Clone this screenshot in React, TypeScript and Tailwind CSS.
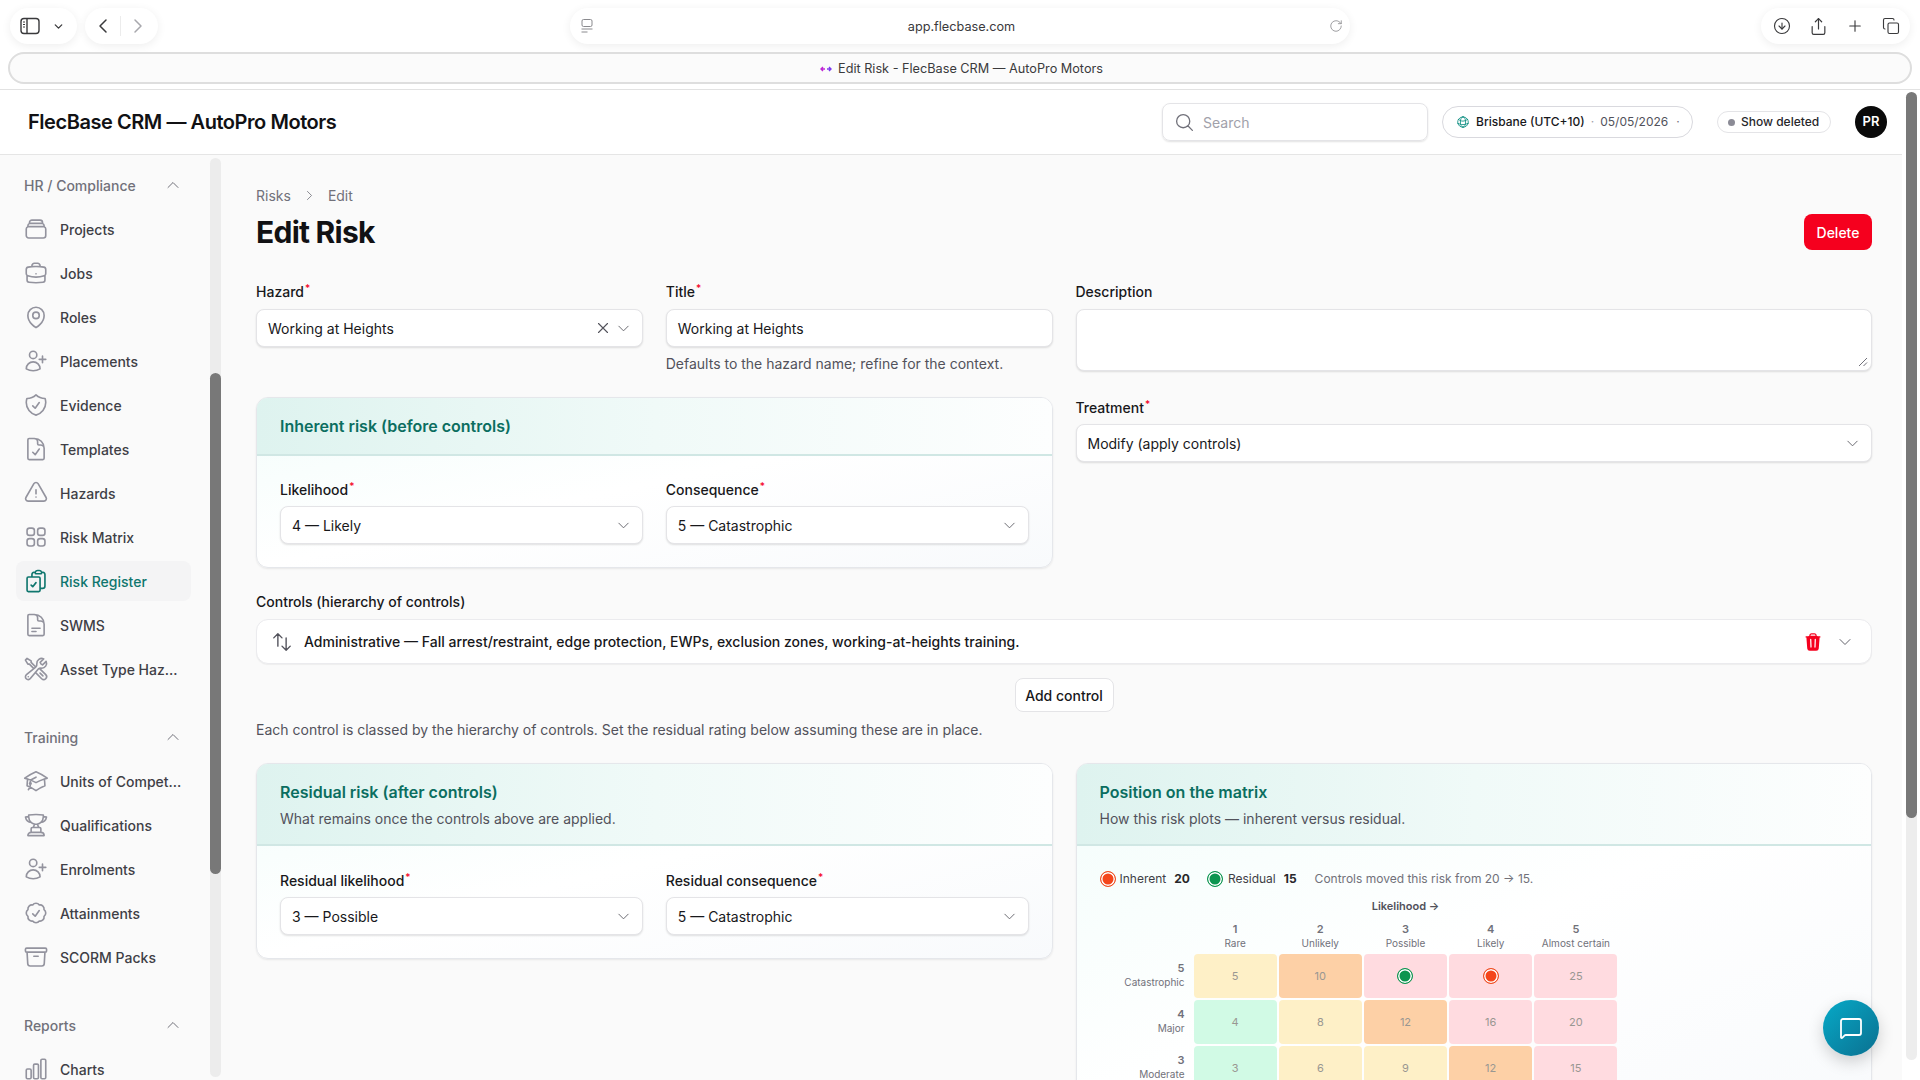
import React from "react";
import {
  HiOutlineRectangleStack, HiOutlineBriefcase, HiOutlineMapPin, HiOutlineUserPlus, HiOutlineShieldCheck,
  HiOutlineDocumentCheck, HiOutlineExclamationTriangle, HiOutlineSquares2X2, HiOutlineClipboardDocumentCheck,
  HiOutlineDocumentText, HiOutlineWrenchScrewdriver, HiOutlineAcademicCap, HiOutlineTrophy, HiOutlineCheckBadge,
  HiOutlineArchiveBox, HiOutlineChartBar, HiOutlineChevronUp, HiOutlineChevronDown, HiOutlineChevronRight,
  HiOutlineMagnifyingGlass, HiOutlineGlobeAlt, HiOutlineArrowsUpDown, HiOutlineXMark, HiTrash,
} from "react-icons/hi2";
import { ChevronLeft, ChevronRight, ChevronDown, Plus, Copy, Share, RotateCw, MessageSquare, ArrowDownCircle } from "lucide-react";

type NavItem = { label: string; Icon: React.ComponentType<{ className?: string }>; active?: boolean };

const sections: { title: string; items: NavItem[] }[] = [
  {
    title: "HR / Compliance",
    items: [
      { label: "Projects", Icon: HiOutlineRectangleStack },
      { label: "Jobs", Icon: HiOutlineBriefcase },
      { label: "Roles", Icon: HiOutlineMapPin },
      { label: "Placements", Icon: HiOutlineUserPlus },
      { label: "Evidence", Icon: HiOutlineShieldCheck },
      { label: "Templates", Icon: HiOutlineDocumentCheck },
      { label: "Hazards", Icon: HiOutlineExclamationTriangle },
      { label: "Risk Matrix", Icon: HiOutlineSquares2X2 },
      { label: "Risk Register", Icon: HiOutlineClipboardDocumentCheck, active: true },
      { label: "SWMS", Icon: HiOutlineDocumentText },
      { label: "Asset Type Haz...", Icon: HiOutlineWrenchScrewdriver },
    ],
  },
  {
    title: "Training",
    items: [
      { label: "Units of Compet...", Icon: HiOutlineAcademicCap },
      { label: "Qualifications", Icon: HiOutlineTrophy },
      { label: "Enrolments", Icon: HiOutlineUserPlus },
      { label: "Attainments", Icon: HiOutlineCheckBadge },
      { label: "SCORM Packs", Icon: HiOutlineArchiveBox },
    ],
  },
  { title: "Reports", items: [{ label: "Charts", Icon: HiOutlineChartBar }] },
];

function Label({ text, required }: { text: string; required?: boolean }) {
  return (
    <div className="h-5 text-[14px] leading-5 font-medium text-[#18181b] whitespace-nowrap">
      {text}
      {required && <sup className="text-[#f5001e] text-[10px] ml-[1px]">*</sup>}
    </div>
  );
}

function Select({ value, clear, tight }: { value: string; clear?: boolean; tight?: boolean }) {
  return (
    <div className={`${tight ? "mt-[6px]" : "mt-[7px]"} h-[38px] bg-white rounded-lg border border-[#e4e4e7] shadow-[0_1px_2px_rgba(0,0,0,0.12)] flex items-center pl-[11px] pr-[11px] text-[14px] text-[#18181b]`}>
      <span className="flex-1 whitespace-nowrap">{value}</span>
      {clear && <HiOutlineXMark className="w-[18px] h-[18px] text-[#52525b] mr-[4px]" />}
      <HiOutlineChevronDown className="w-[15px] h-[15px] text-[#63636b]" />
    </div>
  );
}

function Card({ title, sub, children }: { title: string; sub?: string; children: React.ReactNode }) {
  return (
    <div className="rounded-xl border border-[#e5e7eb] bg-gradient-to-br from-[#f3fdfb] via-white to-[#f8fafc] shadow-[0_1px_2px_rgba(0,0,0,0.08)] overflow-hidden">
      <div className={`bg-gradient-to-r from-[#def3ef] via-[#f0faf8] to-[#fdfefe] border-b-2 border-[#d0e7e4] px-[23px] ${sub ? "pt-[16px] pb-[15px]" : "py-4"}`}>
        <div className="text-[16px] leading-6 font-semibold text-[#0b6e60]">{title}</div>
        {sub && <div className="mt-[5px] text-[14px] leading-5 text-[#52525b]">{sub}</div>}
      </div>
      {children}
    </div>
  );
}

function Marker({ kind }: { kind: "red" | "green" }) {
  const cls = kind === "red"
    ? "border-[#f04e23] bg-[#f4461c]"
    : "border-[#0d9550] bg-[#0d9550]";
  return <span className={`block w-4 h-4 rounded-full border-[1.5px] ${cls} shadow-[inset_0_0_0_1.5px_#fff] shrink-0`} />;
}

const matrix: { n: number; name: string; cells: [string, string | "red" | "green"][] }[] = [
  { n: 5, name: "Catastrophic", cells: [["y", "5"], ["o", "10"], ["p", "green"], ["p", "red"], ["p", "25"]] },
  { n: 4, name: "Major", cells: [["g", "4"], ["y", "8"], ["o", "12"], ["p", "16"], ["p", "20"]] },
  { n: 3, name: "Moderate", cells: [["g", "3"], ["y", "6"], ["y", "9"], ["o", "12"], ["p", "15"]] },
];
const cellBg: Record<string, string> = {
  y: "bg-[#fef0c7]",
  o: "bg-[#fdd0a6]",
  p: "bg-[#ffdbe0]",
  g: "bg-[#d1fae5]",
};
const cols = [["1", "Rare"], ["2", "Unlikely"], ["3", "Possible"], ["4", "Likely"], ["5", "Almost certain"]];

function Sidebar() {
  return (
    <aside className="w-[224px] shrink-0 flex bg-[#fafafa] overflow-hidden">
      <nav className="w-[210px] shrink-0 pt-[18px]">
        {sections.map((s, i) => (
          <div key={s.title} className={i > 0 ? "mt-[36px]" : ""}>
            <div className="h-6 pl-6 pr-[29px] flex items-center justify-between text-[14px] font-medium text-[#71717a]">
              <span>{s.title}</span>
              <HiOutlineChevronUp className="w-[16px] h-[16px] text-[#71717a]" />
            </div>
            <div className="mt-[12px] flex flex-col gap-1 ml-4 mr-[19px]">
              {s.items.map(({ label, Icon, active }) => (
                <div
                  key={label}
                  className={`h-10 rounded-lg flex items-center pl-[7px] text-[14px] whitespace-nowrap ${active ? "bg-[#f4f4f5] text-[#0f766e] font-medium" : "text-[#3f3f46] font-medium"}`}
                >
                  <Icon className={`w-[26px] h-[26px] shrink-0 ${active ? "text-[#0f766e]" : "text-[#93939e]"}`} />
                  <span className="ml-[11px]">{label}</span>
                </div>
              ))}
            </div>
          </div>
        ))}
      </nav>
      <div className="w-[11px] mt-[3px] mb-[3px] rounded-full bg-[#ececec]">
        <div className="mt-[215px] h-[501px] rounded-full bg-[#787878]" />
      </div>
    </aside>
  );
}

function ChromeBar() {
  const pill = "h-9 bg-white rounded-full shadow-[0_2px_10px_rgba(0,0,0,0.07)] flex items-center";
  return (
    <div className="h-[52px] shrink-0 bg-white flex items-start pt-2 px-[10px] text-[#3a3a3c]">
      <div className={`${pill} w-[67px] pl-[10px] gap-[12px]`}>
        <svg width="20" height="18" viewBox="0 0 20 18" fill="none" stroke="#3a3a3c" strokeWidth="1.4">
          <rect x="1" y="1.5" width="18" height="15" rx="3" />
          <path d="M7 1.5v15" />
          <path d="M3 5h2M3 7.5h2M3 10h2" strokeWidth="1" />
        </svg>
        <ChevronDown className="w-[13px] h-[13px]" strokeWidth={2.4} />
      </div>
      <div className={`${pill} ml-2 w-[73px] pl-[6px] gap-[5px]`}>
        <ChevronLeft className="w-[24px] h-[24px]" strokeWidth={1.5} />
        <span className="w-px h-5 bg-[#ececec]" />
        <ChevronRight className="w-[24px] h-[24px] text-[#a8a8ad]" strokeWidth={1.5} />
      </div>
      <div className={`${pill} ml-[412px] w-[780px] pl-[10px] pr-[7px]`}>
        <svg width="14" height="16" viewBox="0 0 14 16" fill="none" stroke="#8a8a8e" strokeWidth="1">
          <rect x="2" y="1.5" width="10" height="7" rx="1.5" />
          <path d="M1.5 11h11M1.5 14h6" />
        </svg>
        <span className="flex-1 text-center text-[12.7px] pt-[1px] text-[#3a3a3c]">app.flecbase.com</span>
        <RotateCw className="w-[14px] h-[14px] text-[#8a8a8e]" strokeWidth={1.4} />
      </div>
      <div className={`${pill} ml-auto w-[149px] justify-between pl-[12px] pr-[10px]`}>
        <ArrowDownCircle className="w-[18px] h-[18px]" strokeWidth={1.5} />
        <Share className="w-[19px] h-[19px]" strokeWidth={1.5} />
        <Plus className="w-[18px] h-[18px]" strokeWidth={1.5} />
        <Copy className="w-[18px] h-[18px]" strokeWidth={1.5} />
      </div>
    </div>
  );
}

export default function App() {
  return (
    <div className="relative w-[1920px] h-[1080px] overflow-hidden bg-white flex flex-col font-['Inter',sans-serif] antialiased">
      <ChromeBar />
      <div className="h-[32px] shrink-0 mx-2 pl-[3px] pt-[1px] rounded-full bg-[#fbfbfb] border-2 border-[#dedede] flex items-center justify-center gap-[6px] text-[12.7px] text-[#3a3a3c]">
        <svg width="12" height="8" viewBox="0 0 12 8" fill="none" strokeWidth="1.4">
          <path d="M1 4h4M3 2 1 4l2 2" stroke="#c026d3" />
          <path d="M7 4h4M9 2l2 2-2 2" stroke="#7c3aed" />
        </svg>
        <span>Edit Risk - FlecBase CRM — AutoPro Motors</span>
      </div>
      <div className="h-[5px] shrink-0 bg-white border-b border-[#e2e2e2] box-content" />
      <div className="flex-1 min-h-0 flex">
        <div className="w-[1902px] shrink-0 flex flex-col min-h-0">
          <header className="h-[65px] shrink-0 bg-white border-b border-[#e5e5e5] flex items-center pl-[28px] pr-[15px]">
            <div className="text-[20px] font-semibold tracking-[-0.45px] text-[#111114] whitespace-nowrap">FlecBase CRM — AutoPro Motors</div>
            <div className="ml-auto w-[266px] h-[38px] rounded-lg border border-[#e4e4e7] shadow-[0_1px_2px_rgba(0,0,0,0.12)] flex items-center pl-[11px] text-[14px] text-[#a1a1aa]">
              <HiOutlineMagnifyingGlass className="w-[21px] h-[21px] text-[#71717a]" />
              <span className="ml-[8px]">Search</span>
            </div>
            <div className="ml-[14px] w-[251px] h-[32px] rounded-full border border-[#d9d9de] flex items-center pl-[13px] text-[12px] whitespace-nowrap">
              <HiOutlineGlobeAlt className="w-[14px] h-[14px] text-[#0f8f82]" />
              <span className="ml-[6px] font-medium text-[#18181b]">Brisbane (UTC+10)</span>
              <span className="mx-[6px] text-[#a1a1aa]">·</span>
              <span className="text-[#52525b]">05/05/2026</span>
              <span className="ml-[8px] text-[#71717a]">·</span>
            </div>
            <div className="ml-6 w-[114px] h-[22px] rounded-full border border-[#e4e4e7] flex items-center pl-[10px] text-[12px] font-medium text-[#27272a] whitespace-nowrap">
              <span className="w-[7px] h-[7px] rounded-full bg-[#8b8b96] mr-[6px]" />
              Show deleted
            </div>
            <div className="ml-6 w-8 h-8 rounded-full bg-[#0a0a0a] text-white text-[13px] font-semibold flex items-center justify-center">PR</div>
          </header>
          <div className="flex-1 min-h-0 flex">
            <Sidebar />
            <main className="flex-1 min-w-0 bg-[#fafafa] overflow-hidden pl-8 pr-[30px] pt-[30px]">
              <div className="h-5 flex items-center text-[14px] text-[#71717a]">
                <span>Risks</span>
                <HiOutlineChevronRight className="w-[13px] h-[13px] mx-[12px]" />
                <span>Edit</span>
              </div>
              <div className="mt-[9px] flex items-center justify-between">
                <h1 className="text-[30px] leading-9 font-bold tracking-[-0.75px] text-[#111114]">Edit Risk</h1>
                <button className="h-9 w-[68px] rounded-lg bg-[#f5001e] text-white text-[14px] font-medium">Delete</button>
              </div>

              <div className="mt-[32px] grid grid-cols-2 gap-x-[23px]">
                <div>
                  <div className="grid grid-cols-2 gap-x-[23px]">
                    <div>
                      <Label text="Hazard" required />
                      <Select value="Working at Heights" clear />
                    </div>
                    <div>
                      <Label text="Title" required />
                      <div className="mt-[7px] h-[38px] bg-white rounded-lg border border-[#e4e4e7] shadow-[0_1px_2px_rgba(0,0,0,0.12)] flex items-center pl-[11px] text-[14px] text-[#18181b]">Working at Heights</div>
                      <div className="mt-[7px] h-5 text-[14px] leading-5 text-[#52525b] whitespace-nowrap">Defaults to the hazard name; refine for the context.</div>
                    </div>
                  </div>
                  <div className="mt-[23px]">
                    <Card title="Inherent risk (before controls)">
                      <div className="px-[23px] pt-6 pb-[23px] grid grid-cols-2 gap-x-[23px]">
                        <div>
                          <Label text="Likelihood" required />
                          <Select tight value="4 — Likely" />
                        </div>
                        <div>
                          <Label text="Consequence" required />
                          <Select tight value="5 — Catastrophic" />
                        </div>
                      </div>
                    </Card>
                  </div>
                </div>
                <div>
                  <Label text="Description" />
                  <div className="relative mt-[7px] h-[62px] bg-white rounded-lg border border-[#e4e4e7] shadow-[0_1px_2px_rgba(0,0,0,0.12)]">
                    <svg className="absolute right-[3px] bottom-[3px]" width="10" height="10" viewBox="0 0 10 10" stroke="#71717a" strokeWidth="1">
                      <path d="M1 9 9 1M5.5 9 9 5.5" />
                    </svg>
                  </div>
                  <div className="mt-[27px]">
                    <Label text="Treatment" required />
                    <Select tight value="Modify (apply controls)" />
                  </div>
                </div>
              </div>

              <div className="mt-6">
                <Label text="Controls (hierarchy of controls)" />
                <div className="mt-[7px] h-[45px] bg-white rounded-xl border border-[#ebebee] shadow-[0_1px_1px_rgba(0,0,0,0.05)] flex items-center pl-[14px] pr-[18px] text-[14px] text-[#18181b]">
                  <HiOutlineArrowsUpDown className="w-[22px] h-[22px] text-[#52525b]" />
                  <span className="ml-[11px] font-medium whitespace-nowrap">Administrative — Fall arrest/restraint, edge protection, EWPs, exclusion zones, working-at-heights training.</span>
                  <HiTrash className="ml-auto w-[20px] h-[20px] text-[#f5001e]" />
                  <HiOutlineChevronDown className="ml-[14px] w-[16px] h-[16px] text-[#63636b]" />
                </div>
              </div>
              <div className="mt-[14px] flex justify-center">
                <button className="h-[34px] w-[99px] rounded-lg bg-white border border-[#e4e4e7] text-[14px] font-medium text-[#18181b]">Add control</button>
              </div>
              <div className="mt-[8px] h-5 text-[14px] leading-5 text-[#52525b]">Each control is classed by the hierarchy of controls. Set the residual rating below assuming these are in place.</div>

              <div className="mt-[23px] grid grid-cols-2 gap-x-[23px] items-start">
                <Card title="Residual risk (after controls)" sub="What remains once the controls above are applied.">
                  <div className="px-[23px] pt-[25px] pb-[23px] grid grid-cols-2 gap-x-[23px]">
                    <div>
                      <Label text="Residual likelihood" required />
                      <Select tight value="3 — Possible" />
                    </div>
                    <div>
                      <Label text="Residual consequence" required />
                      <Select tight value="5 — Catastrophic" />
                    </div>
                  </div>
                </Card>
                <Card title="Position on the matrix" sub="How this risk plots — inherent versus residual.">
                  <div className="px-[23px] pt-6 pb-8">
                    <div className="h-[18px] flex items-center text-[12px] whitespace-nowrap">
                      <Marker kind="red" />
                      <span className="ml-[4px] text-[#3f3f46]">Inherent</span>
                      <span className="ml-[8px] font-bold text-[#27272a]">20</span>
                      <span className="ml-[17px]"><Marker kind="green" /></span>
                      <span className="ml-[5px] text-[#3f3f46]">Residual</span>
                      <span className="ml-[8px] font-bold text-[#27272a]">15</span>
                      <span className="ml-[18px] text-[#71717a]">Controls moved this risk from 20 → 15.</span>
                    </div>
                    <div className="mt-[11px] w-[518px] grid grid-cols-[92px_repeat(5,minmax(0,1fr))] gap-[2px] text-[10px] leading-[14px] text-[#71717a]">
                      <div />
                      <div className="col-span-5 text-center h-[20px] text-[11px] font-semibold text-[#52525b]">Likelihood →</div>
                      <div />
                      {cols.map(([n, name]) => (
                        <div key={n} className="text-center h-[30px] mt-[1px]">
                          <div className="font-semibold text-[11px]">{n}</div>
                          <div>{name}</div>
                        </div>
                      ))}
                      {matrix.map((row) => (
                        <React.Fragment key={row.n}>
                          <div className="text-right pr-[7px] pt-[7px]">
                            <div className="font-semibold text-[11px]">{row.n}</div>
                            <div>{row.name}</div>
                          </div>
                          {row.cells.map(([c, v], i) => (
                            <div key={i} className={`h-[44px] rounded-[4px] flex items-center justify-center text-[11px] text-[#999792] ${cellBg[c]}`}>
                              {v === "red" || v === "green" ? <Marker kind={v} /> : v}
                            </div>
                          ))}
                        </React.Fragment>
                      ))}
                    </div>
                  </div>
                </Card>
              </div>
            </main>
          </div>
        </div>
        <div className="flex-1 pt-[2px] pl-[4px] pr-[3px] bg-white">
          <div className="h-[968px] rounded-full bg-[#ededed]">
            <div className="h-[726px] rounded-full bg-[#787878]" />
          </div>
        </div>
      </div>
      <div className="absolute left-[1823px] top-[1000px] w-[56px] h-[56px] rounded-full bg-gradient-to-br from-[#06aac8] to-[#0a7090] shadow-[0_6px_16px_rgba(0,0,0,0.18)] flex items-center justify-center">
        <MessageSquare className="w-[24px] h-[24px] text-white" strokeWidth={1.8} />
      </div>
    </div>
  );
}
